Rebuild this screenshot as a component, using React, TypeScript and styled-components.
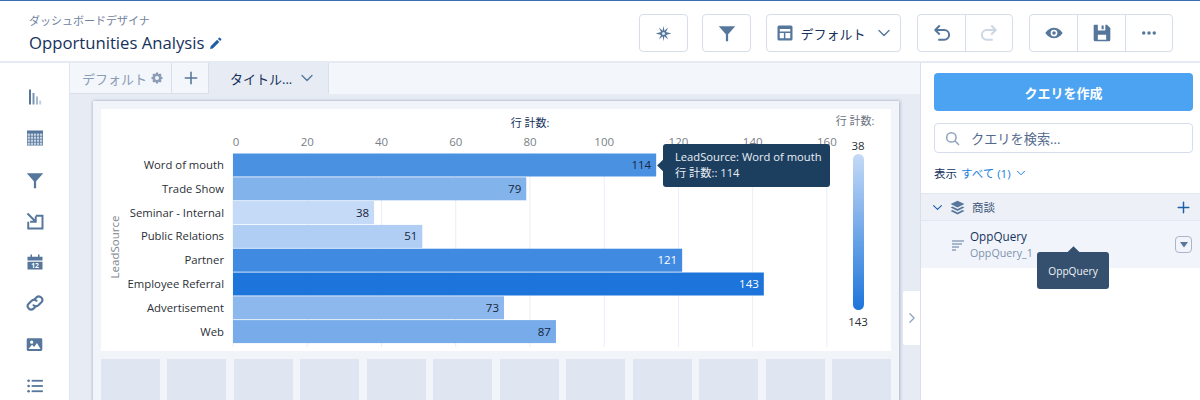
// Libraries
import React, { FC, ReactNode } from 'react';
import styled, { createGlobalStyle } from 'styled-components';

const FONT = '"Open Sans", "Noto Sans CJK JP", sans-serif';
const ICON = '#56779b';
const LINE = '#d5deea';

const Global = createGlobalStyle`
  html, body { margin: 0; padding: 0; background: #fff; }
  body { font-family: ${FONT}; color: #16325c; }
  * { box-sizing: border-box; }
`;

const Page = styled.div`
  width: 1200px;
  height: 400px;
  overflow: hidden;
  display: flex;
  flex-direction: column;
  border-top: 1px solid #3a70ae;
`;

const Header = styled.header`
  height: 62px;
  flex: none;
  display: flex;
  align-items: flex-start;
  justify-content: space-between;
  border-bottom: 2px solid #e6ebf3;
  padding: 13px 27px 0 29px;
`;

const TitleBlock = styled.div`
  display: flex;
  flex-direction: column;
`;

const Eyebrow = styled.div`
  font-size: 11px;
  line-height: 13px;
  color: #6f83a0;
`;

const TitleRow = styled.div`
  display: flex;
  align-items: center;
  gap: 5px;
  margin-top: 4px;
  font-size: 16.7px;
  line-height: 24px;
  color: #16325c;
`;

const Toolbar = styled.div`
  display: flex;
`;

const ButtonGroup = styled.div<{ $gap: number }>`
  display: flex;
  height: 38px;
  margin-right: ${p => p.$gap}px;
  border: 1px solid ${LINE};
  border-radius: 4px;
  background: #fff;
`;

const ToolButton = styled.div<{ $width: number }>`
  width: ${p => p.$width}px;
  display: flex;
  align-items: center;
  justify-content: center;
  font-size: 13px;
  color: #16325c;

  & + & {
    border-left: 1px solid ${LINE};
  }
`;

const ViewLabel = styled.span`
  margin: 0 11px 0 6px;
`;

const Body = styled.div`
  flex: 1;
  display: flex;
  min-height: 0;
`;

const Rail = styled.nav`
  width: 70px;
  flex: none;
  display: flex;
  flex-direction: column;
  align-items: center;
  gap: 21.3px;
  padding: 24px 0 0 0;
  border-right: 1px solid #dfe5ee;
`;

const RailItem = styled.div`
  width: 20px;
  height: 20px;
  display: flex;
  align-items: center;
  justify-content: center;
`;

const Canvas = styled.main`
  width: 851px;
  flex: none;
  position: relative;
  display: flex;
  flex-direction: column;
  background: #e6ebf4;
  border-right: 1px solid #d8dfe9;
`;

const TabBar = styled.div`
  height: 31px;
  flex: none;
  display: flex;
  background: #f3f6fb;
`;

const Tab = styled.div<{ $width: number; $inset: number; $active?: boolean }>`
  width: ${p => p.$width}px;
  display: flex;
  align-items: center;
  padding-left: ${p => p.$inset}px;
  font-size: 13px;
  color: ${p => (p.$active ? '#16325c' : '#8a9cb6')};
  background: ${p => (p.$active ? '#e6ebf4' : '#f3f6fb')};
  border-right: 1px solid #d8dfe9;
  border-bottom: 1px solid ${p => (p.$active ? '#e6ebf4' : '#d8dfe9')};
`;

const TabLabel = styled.span<{ $gap: number }>`
  margin-right: ${p => p.$gap}px;
`;

const Stage = styled.div`
  flex: 1;
  padding: 7px 21px 0 23px;
  min-height: 0;
`;

const Sheet = styled.div`
  height: 320px;
  padding: 8px 8px 0;
  background: #f1f5fa;
  box-shadow: 1px 0 3px rgba(100, 115, 140, 0.45), -1px 0 2px rgba(100, 115, 140, 0.2);
`;

const ChartCard = styled.div`
  position: relative;
  height: 242px;
  background: #fff;
`;

const ChartTip = styled.div`
  position: absolute;
  left: 562px;
  top: 35px;
  width: 167px;
  height: 43px;
  padding: 5px 0 0 12px;
  border-radius: 3px;
  background: #1c3f60;
  color: #e9eef4;
  font-size: 11.2px;
  line-height: 15.5px;
  white-space: nowrap;

  &::before {
    content: '';
    position: absolute;
    left: -4px;
    top: 17px;
    width: 9px;
    height: 9px;
    background: #1c3f60;
    transform: rotate(45deg);
  }
`;

const SlotGrid = styled.div`
  display: grid;
  grid-template-columns: repeat(12, 1fr);
  column-gap: 7.6px;
  margin-top: 8px;
`;

const Slot = styled.div`
  height: 60px;
  background: #dfe6f1;
`;

const CollapseTab = styled.div`
  position: absolute;
  right: 0;
  top: 228px;
  width: 17px;
  height: 54px;
  display: flex;
  align-items: center;
  justify-content: center;
  border-radius: 2px 0 0 2px;
  background: #fff;
`;

const Panel = styled.aside`
  flex: 1;
  display: flex;
  flex-direction: column;
  padding-top: 10px;
`;

const PanelTop = styled.div`
  padding: 0 7px 0 13px;
`;

const CreateButton = styled.div`
  height: 38px;
  display: flex;
  align-items: center;
  justify-content: center;
  border-radius: 4px;
  background: #4ba3f1;
  color: #fff;
  font-size: 13px;
  font-weight: 700;
`;

const SearchBox = styled.div`
  height: 30px;
  margin-top: 12px;
  display: flex;
  align-items: center;
  gap: 11px;
  padding-left: 10px;
  border: 1px solid ${LINE};
  border-radius: 4px;
  font-size: 13.2px;
  color: #54698d;
`;

const ShowRow = styled.div`
  height: 39px;
  margin-bottom: 1px;
  display: flex;
  align-items: center;
  gap: 4px;
  font-size: 11.5px;
  color: #16325c;
`;

const ShowLink = styled.span`
  display: flex;
  align-items: center;
  gap: 5px;
  color: #1b7fdc;
`;

const SectionRow = styled.div`
  height: 28px;
  display: flex;
  align-items: center;
  padding: 0 10px 0 11px;
  background: #edf1f7;
  border-top: 1px solid #e3e8f0;
  border-bottom: 1px solid #e3e8f0;
  font-size: 11.5px;
  color: #3e5677;
`;

const SectionName = styled.span`
  flex: 1;
  margin-left: 7px;
`;

const StackGap = styled.span`
  width: 7px;
`;

const QueryRow = styled.div`
  position: relative;
  height: 47px;
  display: flex;
  align-items: center;
  padding: 0 8px 0 30px;
  background: #f1f5fb;
`;

const QueryText = styled.div`
  flex: 1;
  margin-left: 5px;
`;

const QueryName = styled.div`
  font-size: 11.7px;
  line-height: 15px;
  color: #16325c;
`;

const QuerySub = styled.div`
  margin-top: 2px;
  font-size: 10.7px;
  line-height: 14px;
  color: #7d92ae;
`;

const MenuButton = styled.div`
  width: 17px;
  height: 17px;
  display: flex;
  align-items: center;
  justify-content: center;
  border: 1px solid #a9b6c8;
  border-radius: 4px;
`;

const QueryTip = styled.div`
  position: absolute;
  left: 116px;
  top: 31px;
  width: 72px;
  height: 37px;
  display: flex;
  align-items: center;
  justify-content: center;
  border-radius: 3px;
  background: #34506e;
  color: #f1f4f8;
  font-size: 10.2px;

  &::before {
    content: '';
    position: absolute;
    left: 32px;
    top: -4px;
    width: 9px;
    height: 9px;
    background: #34506e;
    transform: rotate(45deg);
  }
`;

type IconProps = { size?: number; color?: string; children: ReactNode };

const Icon: FC<IconProps> = ({ size = 18, color = ICON, children }) => (
  <svg width={size} height={size} viewBox="0 0 24 24" fill={color} stroke="none">
    {children}
  </svg>
);

const Chevron: FC<{ size?: number; color?: string; dir?: 'down' | 'right' }> = ({ size = 14, color = ICON, dir = 'down' }) => (
  <svg width={size} height={size} viewBox="0 0 14 14" fill="none" stroke={color} strokeWidth={1.4} strokeLinecap="round" strokeLinejoin="round">
    <path d={dir === 'down' ? 'M2 4.5 L7 9.5 L12 4.5' : 'M4.5 2 L9.5 7 L4.5 12'} />
  </svg>
);

const Funnel = () => (
  <Icon size={18}>
    <path d="M1 3 H23 L13.5 13.5 V23 H10.5 V13.5 Z" />
  </Icon>
);

const Sparkle = () => (
  <Icon size={17}>
    <path d="M12 1 L13.2 8 L18.5 3.5 L15.5 10 L23 12 L15.5 14 L18.5 20.5 L13.2 16 L12 23 L10.8 16 L5.5 20.5 L8.5 14 L1 12 L8.5 10 L5.5 3.5 L10.8 8 Z" />
    <circle cx="12" cy="12" r="2.2" fill="#dfe7f0" />
  </Icon>
);

const Layout = () => (
  <Icon size={18}>
    <path fillRule="evenodd" d="M4 2 H20 A2 2 0 0 1 22 4 V20 A2 2 0 0 1 20 22 H4 A2 2 0 0 1 2 20 V4 A2 2 0 0 1 4 2 Z M5 6.5 V10 H19 V6.5 Z M5 12 V19 H10.5 V12 Z M12.5 12 V19 H19 V12 Z" />
  </Icon>
);

const Arrow: FC<{ flip?: boolean; color: string }> = ({ flip, color }) => (
  <svg width={18} height={18} viewBox="0 0 24 24" fill="none" stroke={color} strokeWidth={2.6} strokeLinejoin="round" style={flip ? { transform: 'scaleX(-1)' } : undefined}>
    <path d="M9 2 L3 8 L9 14" />
    <path d="M3 8 H15 A6.5 6.5 0 0 1 15 21 H7" />
  </svg>
);

const Eye = () => (
  <Icon size={18}>
    <path fillRule="evenodd" d="M12 5 C18 5 22 9.5 23.5 12 C22 14.5 18 19 12 19 C6 19 2 14.5 0.5 12 C2 9.5 6 5 12 5 Z M12 7.5 A4.5 4.5 0 1 0 12 16.5 A4.5 4.5 0 1 0 12 7.5 Z" />
    <circle cx="12" cy="12" r="2.4" />
  </Icon>
);

const Save = () => (
  <Icon size={20}>
    <path fillRule="evenodd" d="M3 2 H18 L22 6 V20 A2 2 0 0 1 20 22 H4 A2 2 0 0 1 2 20 V3 A1 1 0 0 1 3 2 Z M7 2 V8 A1 1 0 0 0 8 9 H15 A1 1 0 0 0 16 8 V2 Z M7 14 V20 H17 V14 Z" />
    <rect x="11.5" y="3" width="2.5" height="4.5" />
  </Icon>
);

const Dots = () => (
  <Icon size={18}>
    <circle cx="5" cy="12" r="2.3" />
    <circle cx="12" cy="12" r="2.3" />
    <circle cx="19" cy="12" r="2.3" />
  </Icon>
);

const Pencil = () => (
  <Icon size={13} color="#1f5fa8">
    <path d="M3 17 L15 5 L19 9 L7 21 L2 22 Z M16.5 3.5 L18.5 1.5 A1.5 1.5 0 0 1 20.5 1.5 L22.5 3.5 A1.5 1.5 0 0 1 22.5 5.5 L20.5 7.5 Z" />
  </Icon>
);

const Gear = () => (
  <Icon size={12} color="#8a9cb6">
    <path fillRule="evenodd" d="M10 1 H14 L15 4.5 L18.5 2.8 L21.2 5.5 L19.5 9 L23 10 V14 L19.5 15 L21.2 18.5 L18.5 21.2 L15 19.5 L14 23 H10 L9 19.5 L5.5 21.2 L2.8 18.5 L4.5 15 L1 14 V10 L4.5 9 L2.8 5.5 L5.5 2.8 L9 4.5 Z M12 8 A4 4 0 1 0 12 16 A4 4 0 1 0 12 8 Z" />
  </Icon>
);

const Plus: FC<{ size?: number; color?: string }> = ({ size = 14, color = ICON }) => (
  <svg width={size} height={size} viewBox="0 0 16 16" stroke={color} strokeWidth={1.8} strokeLinecap="round">
    <path d="M8 1.5 V14.5 M1.5 8 H14.5" />
  </svg>
);

const BarsIcon = () => (
  <svg width={20} height={20} viewBox="0 0 20 20">
    <rect x="4" y="2.5" width="2" height="15" fill={ICON} />
    <rect x="7.5" y="6" width="2" height="11.5" fill="#7a95b3" />
    <rect x="11" y="9.5" width="2" height="8" fill="#a6b9cf" />
    <rect x="14.2" y="13.5" width="2" height="4" fill="#c2d0e0" />
  </svg>
);

const TableIcon = () => (
  <svg width={20} height={20} viewBox="0 0 20 20">
    <rect x="2" y="2.5" width="16" height="15" fill={ICON} />
    {[0, 1, 2, 3].map(r =>
      [0, 1, 2, 3, 4].map(c => (
        <rect key={`${r}-${c}`} x={2.6 + c * 3.1} y={5.6 + r * 3} width={2.3} height={2.2} fill="#c9d5e3" />
      )),
    )}
  </svg>
);

const ImportIcon = () => (
  <svg width={18} height={18} viewBox="0 0 24 24" fill="none" stroke={ICON} strokeWidth={2.6}>
    <path d="M3 13 V22 H22 V5 H13" />
    <path d="M2 2 L13 13 M13 5.5 V13 H5.5" />
  </svg>
);

const CalendarIcon = () => (
  <Icon size={18}>
    <path fillRule="evenodd" d="M2 5 H6 V2 H8 V5 H16 V2 H18 V5 H22 V10 H2 Z M2 11.5 H22 V22 H2 Z" />
    <text x="12" y="20" textAnchor="middle" fontSize="9" fontWeight="700" fill="#fff" fontFamily="Open Sans, sans-serif">12</text>
  </Icon>
);

const LinkIcon = () => (
  <svg width={18} height={18} viewBox="0 0 24 24" fill="none" stroke={ICON} strokeWidth={2.8} strokeLinecap="round">
    <path d="M10.5 8 L14 4.5 A4.6 4.6 0 0 1 20.5 11 L16.5 15 A4.6 4.6 0 0 1 10 15" />
    <path d="M13.5 16 L10 19.5 A4.6 4.6 0 0 1 3.5 13 L7.5 9 A4.6 4.6 0 0 1 14 9" />
  </svg>
);

const ImageIcon = () => (
  <Icon size={17}>
    <path fillRule="evenodd" d="M3 3 H21 A2 2 0 0 1 23 5 V19 A2 2 0 0 1 21 21 H3 A2 2 0 0 1 1 19 V5 A2 2 0 0 1 3 3 Z M8 6.5 A2.3 2.3 0 1 0 8 11.1 A2.3 2.3 0 1 0 8 6.5 Z M3.5 18.5 H20.5 L15.5 10 L11.5 15.5 L8.5 12.5 Z" />
  </Icon>
);

const ListIcon = () => (
  <Icon size={18}>
    <circle cx="3.5" cy="5" r="1.8" />
    <circle cx="3.5" cy="12" r="1.8" />
    <circle cx="3.5" cy="19" r="1.8" />
    <rect x="7.5" y="3.8" width="15" height="2.4" />
    <rect x="7.5" y="10.8" width="15" height="2.4" />
    <rect x="7.5" y="17.8" width="15" height="2.4" />
  </Icon>
);

const SearchIcon = () => (
  <svg width={15} height={15} viewBox="0 0 16 16" fill="none" stroke="#8fa3bc" strokeWidth={1.6} strokeLinecap="round">
    <circle cx="6.8" cy="6.8" r="5" />
    <path d="M10.6 10.6 L14.5 14.5" />
  </svg>
);

const StackIcon = () => (
  <Icon size={15}>
    <path d="M12 1 L23 6.5 L12 12 L1 6.5 Z" />
    <path d="M4 10.5 L12 14.5 L20 10.5 L23 12 L12 17.5 L1 12 Z" />
    <path d="M4 16 L12 20 L20 16 L23 17.5 L12 23 L1 17.5 Z" />
  </Icon>
);

const QueryIcon = () => (
  <svg width={14} height={14} viewBox="0 0 14 14" stroke="#8fa3bc" strokeWidth={1.3}>
    <path d="M1 3 H13 M1 6 H11 M1 9 H8 M1 12 H5" />
  </svg>
);

const MAX = 143;
const ROWS: [string, number][] = [
  ['Word of mouth', 114],
  ['Trade Show', 79],
  ['Seminar - Internal', 38],
  ['Public Relations', 51],
  ['Partner', 121],
  ['Employee Referral', 143],
  ['Advertisement', 73],
  ['Web', 87],
];
const TICKS = [0, 20, 40, 60, 80, 100, 120, 140, 160];
const X0 = 132;
const UNIT = 3.712;

// light end of the scale is 38, dark end is 143
const barColor = (v: number) => {
  const t = (v - 38) / (MAX - 38);
  const mix = (a: number, b: number) => Math.round(a + (b - a) * t);
  return `rgb(${mix(197, 29)},${mix(218, 117)},${mix(246, 219)})`;
};

const BarChart = () => (
  <svg width={790} height={242} viewBox="0 0 790 242" fontFamily={FONT}>
    <defs>
      <linearGradient id="legend" x1="0" y1="0" x2="0" y2="1">
        <stop offset="0" stopColor="#c5daf6" />
        <stop offset="1" stopColor="#1d75db" />
      </linearGradient>
    </defs>
    <text x={429} y={18} textAnchor="middle" fontSize={11} fill="#16325c">行 計数:</text>
    <text x={754} y={16} textAnchor="middle" fontSize={11} fill="#6b7280">行 計数:</text>
    {TICKS.map(t => (
      <g key={t}>
        <line x1={X0 + t * UNIT} x2={X0 + t * UNIT} y1={44} y2={238} stroke="#e8eef6" />
        <text x={t === 0 ? 135 : X0 + t * UNIT} y={37} textAnchor="middle" fontSize={11.5} fill="#7a7f87">{t}</text>
      </g>
    ))}
    <text transform="translate(18 138) rotate(-90)" textAnchor="middle" fontSize={11.5} fill="#80868e">LeadSource</text>
    {ROWS.map(([label, v], i) => {
      const y = 44.5 + i * 23.8;
      const w = v * UNIT;
      const light = v > 114;
      return (
        <g key={label}>
          <rect x={X0} y={y} width={w} height={23} fill={barColor(v)} />
          <text x={123} y={y + 15.5} textAnchor="end" fontSize={11.3} fill="#2b2f36">{label}</text>
          <text x={X0 + w - 5} y={y + 15.5} textAnchor="end" fontSize={11.5} fill={light ? '#fff' : '#16263c'}>{v}</text>
        </g>
      );
    })}
    <text x={757} y={41} textAnchor="middle" fontSize={11.5} fill="#2b2f36">38</text>
    <rect x={752} y={45} width={11} height={156} rx={5.5} fill="url(#legend)" />
    <text x={757} y={217} textAnchor="middle" fontSize={11.5} fill="#2b2f36">143</text>
  </svg>
);

const App: FC = () => (
  <Page>
    <Global />
    <Header>
      <TitleBlock>
        <Eyebrow>ダッシュボードデザイナ</Eyebrow>
        <TitleRow>
          Opportunities Analysis
          <Pencil />
        </TitleRow>
      </TitleBlock>
      <Toolbar>
        <ButtonGroup $gap={14}>
          <ToolButton $width={47}><Sparkle /></ToolButton>
        </ButtonGroup>
        <ButtonGroup $gap={15}>
          <ToolButton $width={47}><Funnel /></ToolButton>
        </ButtonGroup>
        <ButtonGroup $gap={16}>
          <ToolButton $width={133}>
            <Layout />
            <ViewLabel>デフォルト</ViewLabel>
            <Chevron />
          </ToolButton>
        </ButtonGroup>
        <ButtonGroup $gap={16}>
          <ToolButton $width={47}><Arrow color={ICON} /></ToolButton>
          <ToolButton $width={47}><Arrow flip color="#ccd6e4" /></ToolButton>
        </ButtonGroup>
        <ButtonGroup $gap={0}>
          <ToolButton $width={47}><Eye /></ToolButton>
          <ToolButton $width={48}><Save /></ToolButton>
          <ToolButton $width={47}><Dots /></ToolButton>
        </ButtonGroup>
      </Toolbar>
    </Header>
    <Body>
      <Rail>
        <RailItem><BarsIcon /></RailItem>
        <RailItem><TableIcon /></RailItem>
        <RailItem><Funnel /></RailItem>
        <RailItem><ImportIcon /></RailItem>
        <RailItem><CalendarIcon /></RailItem>
        <RailItem><LinkIcon /></RailItem>
        <RailItem><ImageIcon /></RailItem>
        <RailItem><ListIcon /></RailItem>
      </Rail>
      <Canvas>
        <TabBar>
          <Tab $width={102} $inset={12}><TabLabel $gap={4}>デフォルト</TabLabel><Gear /></Tab>
          <Tab $width={37} $inset={12}><Plus /></Tab>
          <Tab $width={120} $inset={21} $active><TabLabel $gap={8}>タイトル...</TabLabel><Chevron /></Tab>
        </TabBar>
        <Stage>
          <Sheet>
            <ChartCard>
              <BarChart />
              <ChartTip>
                LeadSource: Word of mouth
                <br />
                行 計数:: 114
              </ChartTip>
            </ChartCard>
            <SlotGrid>
              {Array.from({ length: 12 }, (_, i) => <Slot key={i} />)}
            </SlotGrid>
          </Sheet>
        </Stage>
        <CollapseTab>
          <Chevron size={12} dir="right" color="#8fa3bc" />
        </CollapseTab>
      </Canvas>
      <Panel>
        <PanelTop>
          <CreateButton>クエリを作成</CreateButton>
          <SearchBox>
            <SearchIcon />
            クエリを検索...
          </SearchBox>
          <ShowRow>
            表示
            <ShowLink>すべて (1) <Chevron size={10} color="#1b7fdc" /></ShowLink>
          </ShowRow>
        </PanelTop>
        <SectionRow>
          <Chevron size={11} color="#1f5fa8" />
          <StackGap />
          <StackIcon />
          <SectionName>商談</SectionName>
          <Plus size={13} color="#1f5fa8" />
        </SectionRow>
        <QueryRow>
          <QueryIcon />
          <QueryText>
            <QueryName>OppQuery</QueryName>
            <QuerySub>OppQuery_1</QuerySub>
          </QueryText>
          <MenuButton>
            <svg width={8} height={6} viewBox="0 0 8 6"><path d="M0 0 H8 L4 5.5 Z" fill={ICON} /></svg>
          </MenuButton>
          <QueryTip>OppQuery</QueryTip>
        </QueryRow>
      </Panel>
    </Body>
  </Page>
);

export default App;
